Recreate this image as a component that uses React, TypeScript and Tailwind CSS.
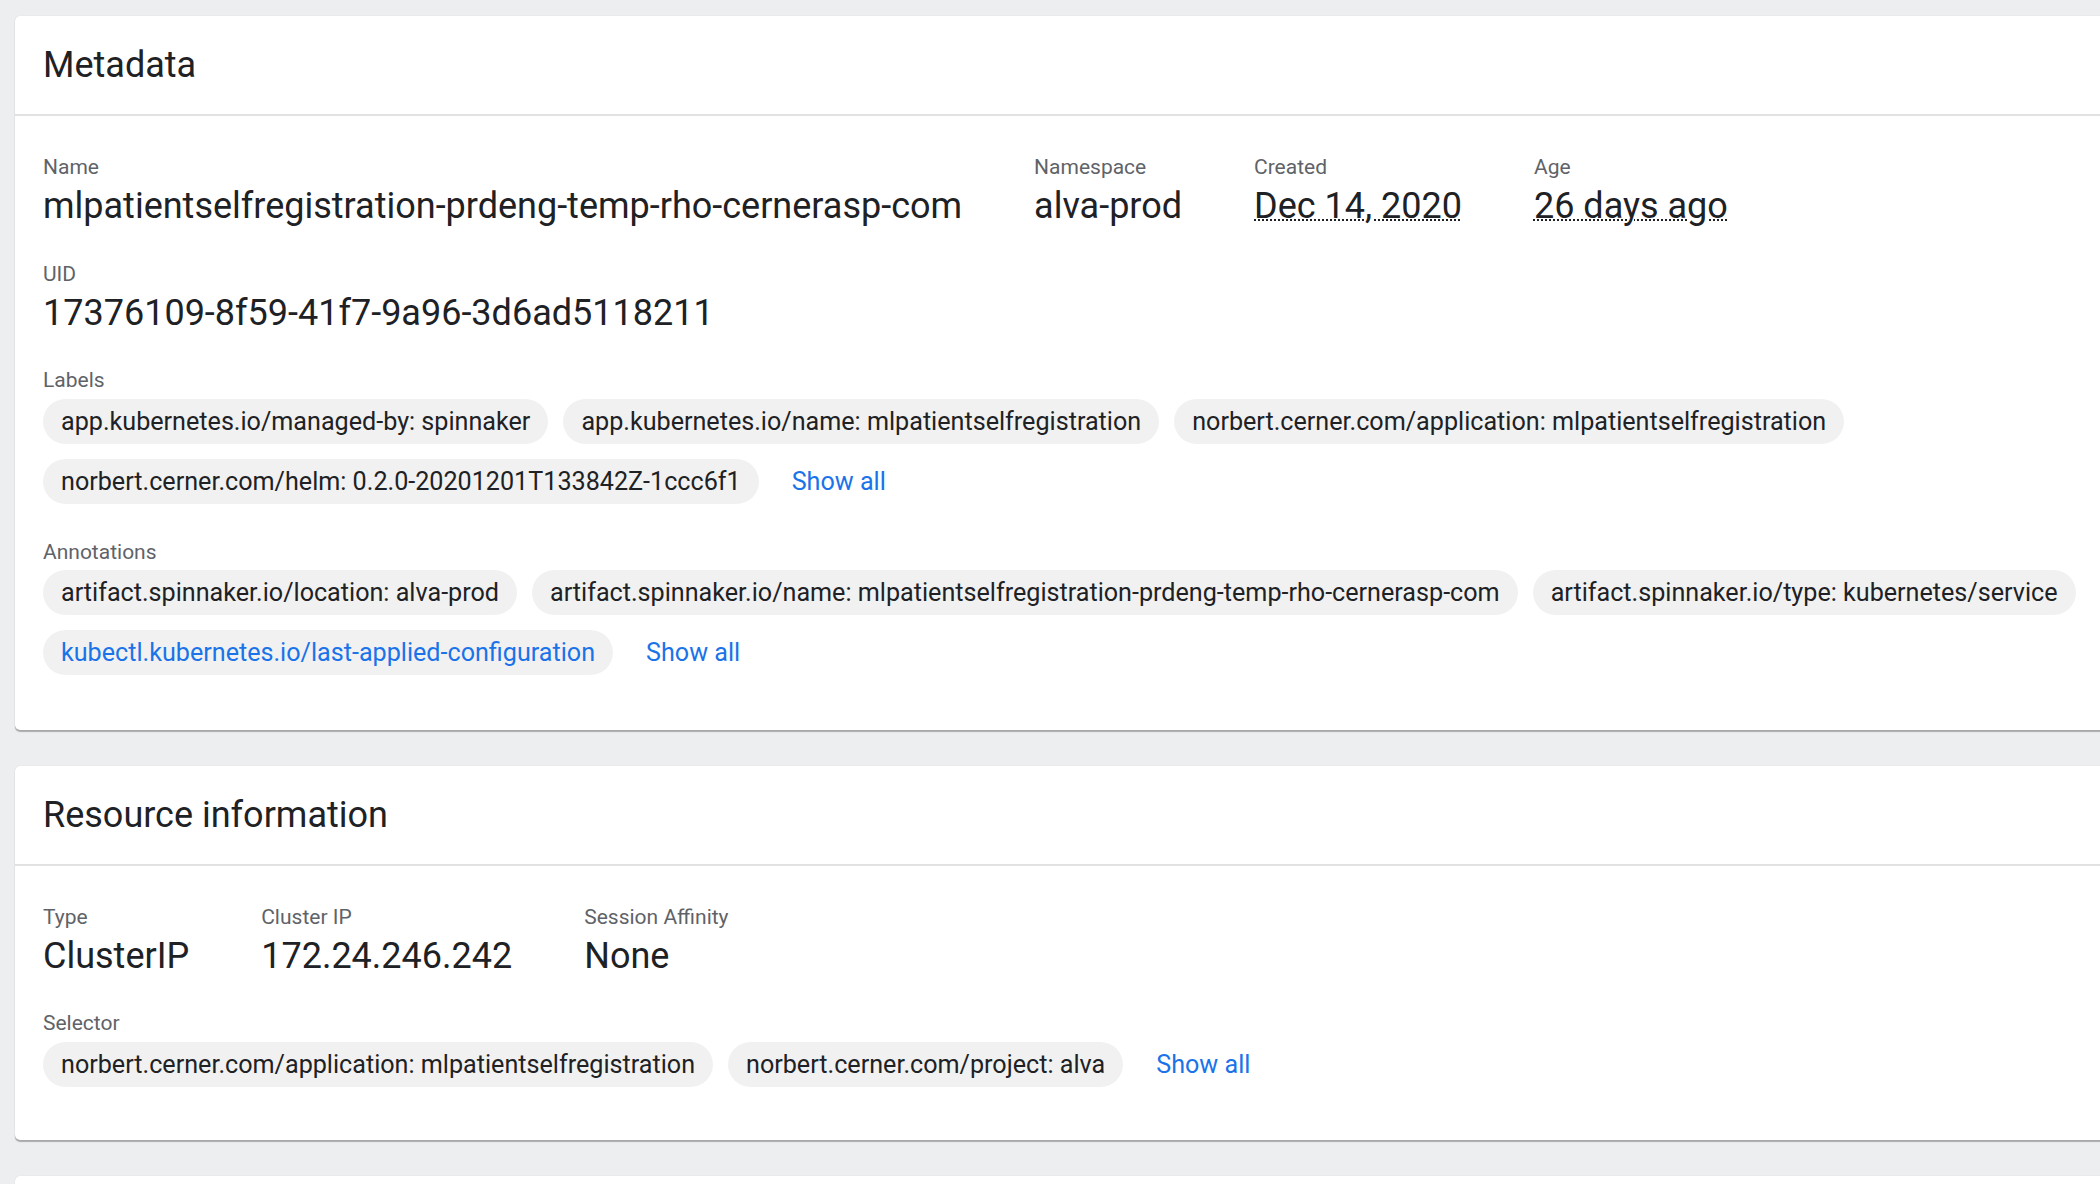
import React from "react";

const font = { fontFamily: "Roboto, 'Noto Sans', Arial, sans-serif" };

function Field({
  label,
  value,
  dotted,
}: {
  label: string;
  value: string;
  dotted?: boolean;
}) {
  return (
    <div className="flex flex-col">
      <div className="text-[21px] leading-[30px] text-[#5f6368]">{label}</div>
      <div
        className={
          dotted
            ? "text-[36px] leading-[48px] text-[#202124] underline decoration-dotted decoration-[2px] underline-offset-[1px]"
            : "text-[36px] leading-[48px] text-[#202124]"
        }
      >
        {value}
      </div>
    </div>
  );
}

function Chips({ items, link }: { items: { text: string; blue?: boolean }[]; link?: string }) {
  return (
    <div className="flex flex-wrap items-center gap-[15px]">
      {items.map((c) => (
        <span
          key={c.text}
          className={
            c.blue
              ? "h-[45px] flex items-center px-[18px] rounded-full bg-[#f1f1f1] text-[25.15px] text-[#1a73e8]"
              : "h-[45px] flex items-center px-[18px] rounded-full bg-[#f1f1f1] text-[25.15px] text-[#202124]"
          }
        >
          {c.text}
        </span>
      ))}
      {link && (
        <span className="ml-[18px] text-[25.15px] leading-[45px] text-[#1a73e8]">{link}</span>
      )}
    </div>
  );
}

function Card({
  title,
  last,
  children,
}: {
  title: string;
  last?: boolean;
  children: React.ReactNode;
}) {
  return (
    <section className="w-[2300px] ml-[15px] bg-white rounded-l-[5px] shadow-[0_2px_1px_rgba(0,0,0,0.28),0_0_1px_rgba(0,0,0,0.18)]">
      <div className="h-[100px] flex items-center px-[28px] border-b-2 border-[#e2e2e2]">
        <h2 className="text-[36px] text-[#202124] font-normal">{title}</h2>
      </div>
      <div className={last ? "px-[28px] pt-[36px] pb-[53px]" : "px-[28px] pt-[36px] pb-[55px]"}>
        {children}
      </div>
    </section>
  );
}

export default function App() {
  return (
    <div className="min-h-screen w-full overflow-hidden bg-[#edeef0] pt-[16px]" style={font}>
      <Card title="Metadata">
        <div className="flex gap-[72px]">
          <Field label="Name" value="mlpatientselfregistration-prdeng-temp-rho-cernerasp-com" />
          <Field label="Namespace" value="alva-prod" />
          <Field label="Created" value="Dec 14, 2020" dotted />
          <Field label="Age" value="26 days ago" dotted />
        </div>
        <div className="mt-[29px]">
          <Field label="UID" value="17376109-8f59-41f7-9a96-3d6ad5118211" />
        </div>
        <div className="mt-[28px] w-[2240px]">
          <div className="text-[21px] leading-[30px] text-[#5f6368] mb-[4px]">Labels</div>
          <Chips
            items={[
              { text: "app.kubernetes.io/managed-by: spinnaker" },
              { text: "app.kubernetes.io/name: mlpatientselfregistration" },
              { text: "norbert.cerner.com/application: mlpatientselfregistration" },
              { text: "norbert.cerner.com/helm: 0.2.0-20201201T133842Z-1ccc6f1" },
            ]}
            link="Show all"
          />
        </div>
        <div className="mt-[33px] w-[2240px]">
          <div className="text-[21px] leading-[30px] text-[#5f6368] mb-[3px]">Annotations</div>
          <Chips
            items={[
              { text: "artifact.spinnaker.io/location: alva-prod" },
              { text: "artifact.spinnaker.io/name: mlpatientselfregistration-prdeng-temp-rho-cernerasp-com" },
              { text: "artifact.spinnaker.io/type: kubernetes/service" },
              { text: "kubectl.kubernetes.io/last-applied-configuration", blue: true },
            ]}
            link="Show all"
          />
        </div>
      </Card>

      <div className="h-[36px]" />

      <Card title="Resource information" last>
        <div className="flex gap-[72px]">
          <Field label="Type" value="ClusterIP" />
          <Field label="Cluster IP" value="172.24.246.242" />
          <Field label="Session Affinity" value="None" />
        </div>
        <div className="mt-[28px] w-[2240px]">
          <div className="text-[21px] leading-[30px] text-[#5f6368] mb-[4px]">Selector</div>
          <Chips
            items={[
              { text: "norbert.cerner.com/application: mlpatientselfregistration" },
              { text: "norbert.cerner.com/project: alva" },
            ]}
            link="Show all"
          />
        </div>
      </Card>

      <div className="h-[36px]" />

      <section className="w-[2300px] ml-[15px] h-[200px] bg-white rounded-l-[5px] shadow-[0_0_1px_rgba(0,0,0,0.18)]" />
    </div>
  );
}
